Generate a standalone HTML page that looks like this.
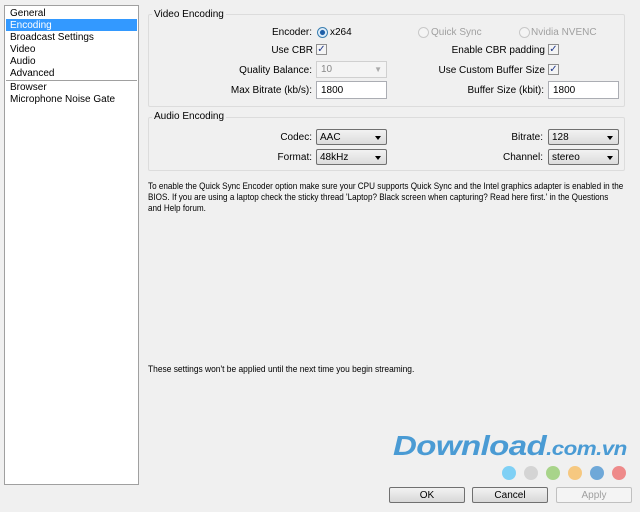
<!DOCTYPE html>
<html><head><style>
*{box-sizing:border-box}
body{margin:0;width:640px;height:512px;background:#f0f0f0;font-family:"Liberation Sans",sans-serif;font-size:10px;color:#000;position:relative;overflow:hidden}
.a{position:absolute;white-space:nowrap}
.side{left:4px;top:5px;width:135px;height:480px;background:#fff;border:1px solid #a0a0a0}
.it{position:absolute;left:1px;width:131px;height:12px;line-height:13px;padding-left:4px}
.grp{border:1px solid #dcdcdc;border-radius:2px;background:#f0f0f0}
.lg{background:#f0f0f0;padding:0 2px;line-height:12px}
.r{text-align:right}
.inp{background:#fff;border:1px solid #abadb3;height:18px;line-height:16px;padding-left:4px}
.sel{border:1px solid #707070;border-radius:2px;height:16px;line-height:15px;padding-left:3px;background:linear-gradient(#f2f2f2,#dcdcdc)}
.sel:after{content:"";position:absolute;right:5px;top:6px;border:3.5px solid transparent;border-top:4px solid #000}
.cb{width:11px;height:11px;border:1px solid #8f8f8f;background:#f4f4f4;color:#223a8a;font-size:10px;line-height:9px;text-align:center}
.rad{width:11px;height:11px;border-radius:50%;border:1px solid #c8c8c8;background:#f4f4f4}
.btn{top:487px;width:76px;height:16px;border:1px solid #707070;border-radius:2px;background:linear-gradient(#f2f2f2,#d8d8d8);text-align:center;line-height:15px}
.dot{top:466px;width:14px;height:14px;border-radius:50%}
</style></head><body>
<div class="a side">
<div class="it" style="top:1px">General</div>
<div class="it" style="top:13px;background:#3399ff;color:#fff">Encoding</div>
<div class="it" style="top:25px">Broadcast Settings</div>
<div class="it" style="top:37px">Video</div>
<div class="it" style="top:49px">Audio</div>
<div class="it" style="top:61px">Advanced</div>
<div style="position:absolute;left:1px;top:74px;width:131px;height:1px;background:#a0a0a0"></div>
<div class="it" style="top:75px">Browser</div>
<div class="it" style="top:87px">Microphone Noise Gate</div>
</div>

<div class="a grp" style="left:148px;top:14px;width:477px;height:93px"></div>
<div class="a lg" style="left:152px;top:9px">Video Encoding</div>
<div class="a r" style="left:200px;top:27px;width:112px">Encoder:</div>
<div class="a rad" style="left:317px;top:27px;border-color:#3c7fb1;background:radial-gradient(#1f5fa8 35%,#dfeefa 45%)"></div>
<div class="a" style="left:330px;top:27px">x264</div>
<div class="a rad" style="left:418px;top:27px"></div>
<div class="a" style="left:431px;top:27px;color:#a0a0a0">Quick Sync</div>
<div class="a rad" style="left:519px;top:27px"></div>
<div class="a" style="left:531px;top:27px;color:#a0a0a0">Nvidia NVENC</div>

<div class="a r" style="left:200px;top:45px;width:113px">Use CBR</div>
<div class="a cb" style="left:316px;top:44px">✓</div>
<div class="a r" style="left:420px;top:45px;width:125px">Enable CBR padding</div>
<div class="a cb" style="left:548px;top:44px">✓</div>

<div class="a r" style="left:200px;top:65px;width:112px">Quality Balance:</div>
<div class="a inp" style="left:316px;top:61px;width:71px;height:17px;border-color:#d0d0d0;background:#f4f4f4;color:#888">10<span style="position:absolute;right:4px;top:0;color:#aaa;font-size:8px">▼</span></div>
<div class="a r" style="left:420px;top:65px;width:125px">Use Custom Buffer Size</div>
<div class="a cb" style="left:548px;top:64px">✓</div>

<div class="a r" style="left:200px;top:85px;width:112px">Max Bitrate (kb/s):</div>
<div class="a inp" style="left:316px;top:81px;width:71px;line-height:17px">1800</div>
<div class="a r" style="left:420px;top:85px;width:124px">Buffer Size (kbit):</div>
<div class="a inp" style="left:548px;top:81px;width:71px;line-height:17px">1800</div>

<div class="a grp" style="left:148px;top:117px;width:477px;height:54px"></div>
<div class="a lg" style="left:152px;top:111px">Audio Encoding</div>
<div class="a r" style="left:200px;top:132px;width:112px">Codec:</div>
<div class="a sel" style="left:316px;top:129px;width:71px">AAC</div>
<div class="a r" style="left:420px;top:132px;width:123px">Bitrate:</div>
<div class="a sel" style="left:548px;top:129px;width:71px">128</div>
<div class="a r" style="left:200px;top:152px;width:112px">Format:</div>
<div class="a sel" style="left:316px;top:149px;width:71px">48kHz</div>
<div class="a r" style="left:420px;top:152px;width:123px">Channel:</div>
<div class="a sel" style="left:548px;top:149px;width:71px">stereo</div>

<div class="a" style="left:148px;top:181px;line-height:11px;font-size:9.3px;transform:scaleX(0.875);transform-origin:0 0">To enable the Quick Sync Encoder option make sure your CPU supports Quick Sync and the Intel graphics adapter is enabled in the<br>BIOS. If you are using a laptop check the sticky thread 'Laptop? Black screen when capturing? Read here first.' in the Questions<br>and Help forum.</div>
<div class="a" style="left:148px;top:364px;font-size:9.3px;transform:scaleX(0.905);transform-origin:0 0">These settings won't be applied until the next time you begin streaming.</div>

<div class="a" style="left:393px;top:430px;font-size:28px;font-weight:bold;font-style:italic;color:#4a9bd4;letter-spacing:-0.5px;transform:scaleX(1.18);transform-origin:0 0">Download<span style="font-size:19px">.com.vn</span></div>
<div class="a dot" style="left:502px;background:#7fd0f5"></div>
<div class="a dot" style="left:524px;background:#d4d4d4"></div>
<div class="a dot" style="left:546px;background:#a8d48a"></div>
<div class="a dot" style="left:568px;background:#f6c880"></div>
<div class="a dot" style="left:590px;background:#6fa8d8"></div>
<div class="a dot" style="left:612px;background:#ee8a8a"></div>

<div class="a btn" style="left:389px">OK</div>
<div class="a btn" style="left:472px">Cancel</div>
<div class="a btn" style="left:556px;border-color:#c0c0c0;background:#f4f4f4;color:#a0a0a0">Apply</div>
</body></html>
